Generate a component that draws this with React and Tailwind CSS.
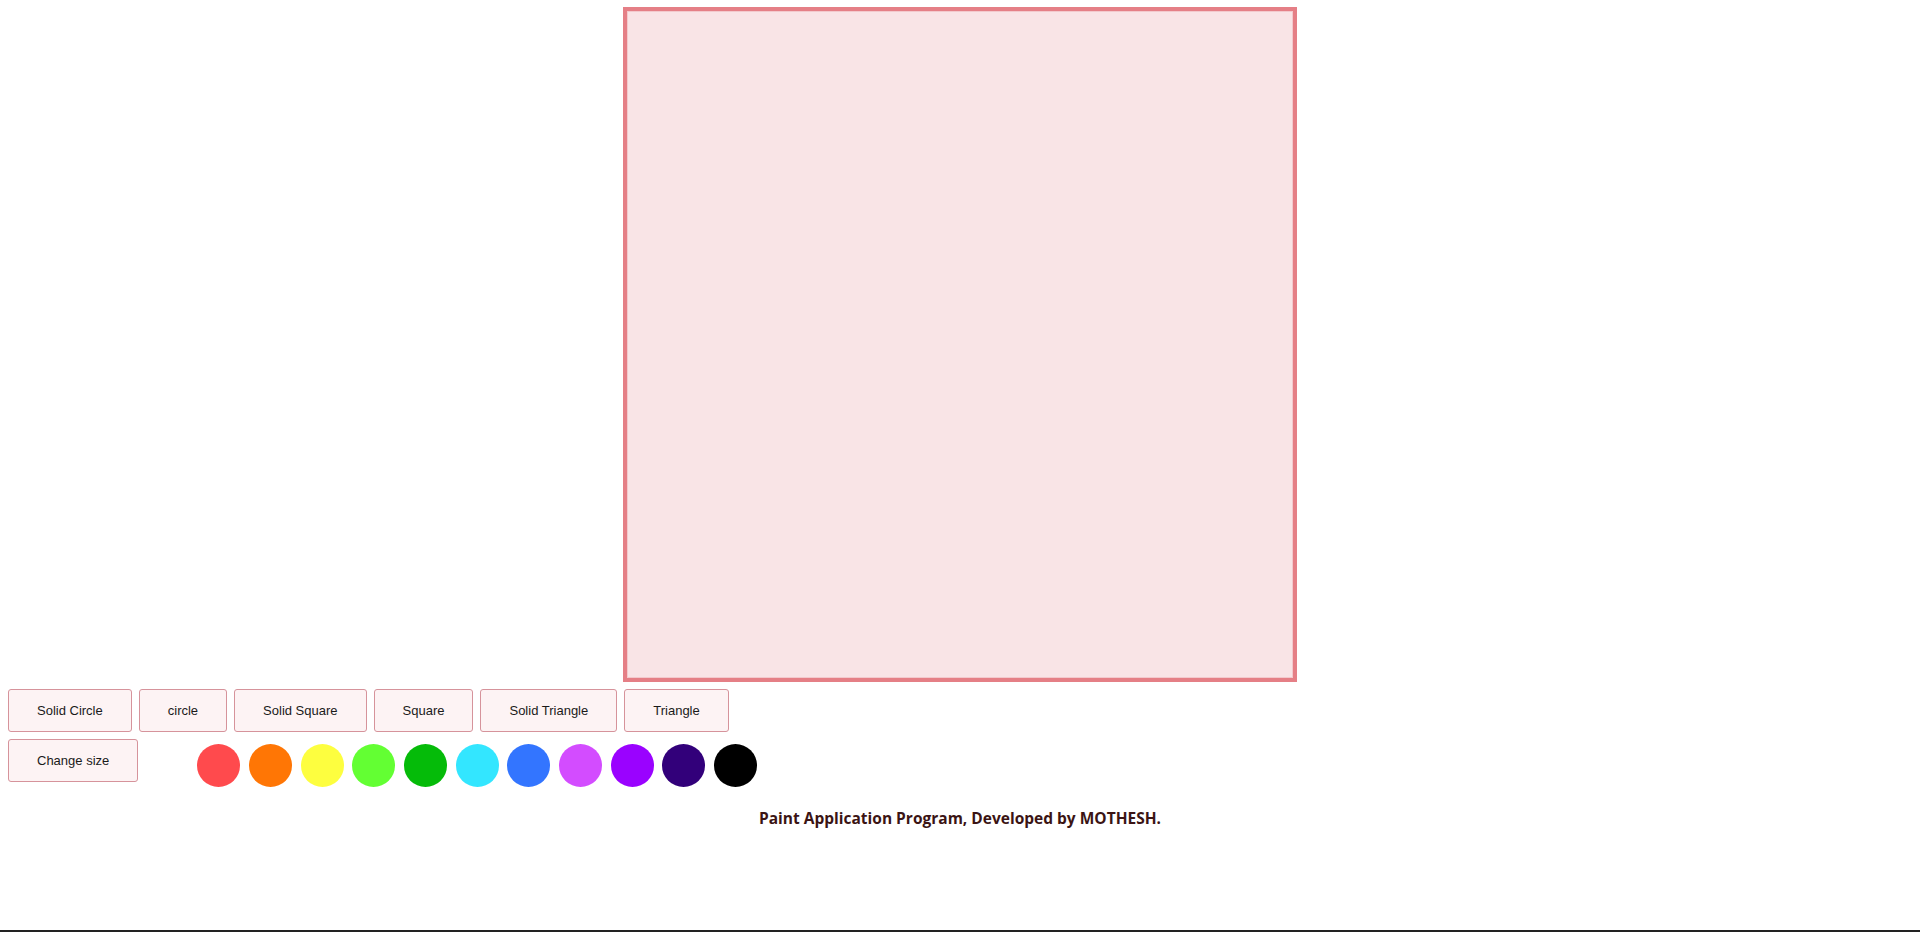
import React from 'react';

const shapes = ['Solid Circle', 'circle', 'Solid Square', 'Square', 'Solid Triangle', 'Triangle'];

const colors = [
  'bg-[#ff4a4d]',
  'bg-[#ff7605]',
  'bg-[#fdfe3f]',
  'bg-[#63ff33]',
  'bg-[#05bb09]',
  'bg-[#33e6ff]',
  'bg-[#3375ff]',
  'bg-[#d34cff]',
  'bg-[#9a02ff]',
  'bg-[#32007a]',
  'bg-[#000000]',
];

const ToolButton = ({ label }) => (
  <button className="px-[28px] py-[13px] text-[13px] leading-[15px] text-[#1a1a1a] bg-[#fdf3f4] border border-[#d6939b] rounded-[3px]">
    {label}
  </button>
);

const App = () => {
  return (
    <div className="h-[932px] flex flex-col bg-white border-b-2 border-[#222] font-['Liberation_Sans',Arial,sans-serif]">
      {/* Drawing canvas */}
      <div className="flex justify-center pt-[7px]">
        <div className="w-[674px] h-[675px] bg-[#f9e4e6] border-4 border-[#e57f86] shadow-[inset_0_0_0_1px_#f3c9cd]"></div>
      </div>

      {/* Shape tools */}
      <div className="flex gap-[7px] px-2 mt-[7px]">
        {shapes.map((s) => (
          <ToolButton key={s} label={s} />
        ))}
      </div>

      {/* Size + palette */}
      <div className="flex items-start px-2 mt-[7px]">
        <ToolButton label="Change size" />
        <div className="flex gap-[8.7px] ml-[59px] mt-[5px]">
          {colors.map((c) => (
            <div key={c} className={`w-[43px] h-[43px] rounded-full ${c}`}></div>
          ))}
        </div>
      </div>

      <p className="mt-[20px] text-center text-[15.5px] font-bold text-[#3b1414] font-['Open_Sans',sans-serif]">
        Paint Application Program, Developed by MOTHESH.
      </p>
    </div>
  );
};

export default App;
